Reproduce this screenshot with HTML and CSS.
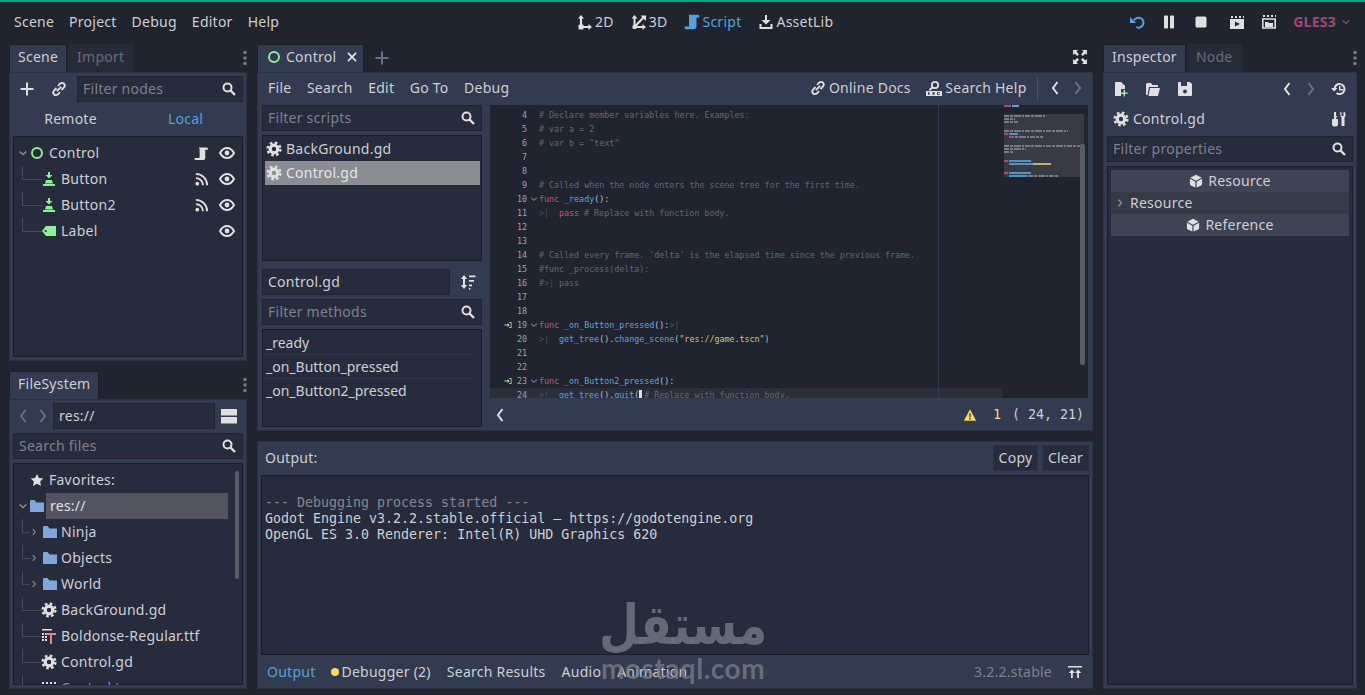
FILE: index.html
```html
<!DOCTYPE html>
<html lang="en">
<head>
    <meta charset="UTF-8">
    <title>Godot Engine</title>
    <link rel="stylesheet" href="styles.css">
</head>
<body>
    <svg class="sprite" xmlns="http://www.w3.org/2000/svg">
        <symbol id="i-search" viewBox="0 0 16 16"><circle cx="6.5" cy="6.5" r="4" fill="none" stroke="currentColor" stroke-width="2"/><path d="M9.5 9.5l4.5 4.5" stroke="currentColor" stroke-width="2.4"/></symbol>
        <symbol id="i-gear" viewBox="0 0 16 16"><circle cx="8" cy="8" r="3.8" fill="none" stroke="currentColor" stroke-width="3.2"/><circle cx="8" cy="8" r="6.4" fill="none" stroke="currentColor" stroke-width="2.4" stroke-dasharray="2.6 2.43"/></symbol>
        <symbol id="i-eye" viewBox="0 0 16 16"><path d="M1 8c2-3.6 4.400-5 7-5s5 1.400 7 5c-2 3.600-4.400 5-7 5s-5-1.400-7-5z" fill="none" stroke="currentColor" stroke-width="2"/><circle cx="8" cy="8" r="2.400" fill="currentColor"/></symbol>
        <symbol id="i-plus" viewBox="0 0 16 16"><path d="M8 1.500v13M1.500 8h13" stroke="currentColor" stroke-width="2"/></symbol>
        <symbol id="i-link" viewBox="0 0 16 16"><path d="M7 5l2-2.300c1.400-1.200 3-1.200 4 0s1 2.800-.2 4L10.500 9M9 11l-2 2.300c-1.400 1.200-3 1.200-4 0s-1-2.800.2-4L5.500 7M5.800 10.200l4.400-4.400" fill="none" stroke="currentColor" stroke-width="1.800"/></symbol>
        <symbol id="i-circle" viewBox="0 0 16 16"><circle cx="8" cy="8" r="5" fill="none" stroke="currentColor" stroke-width="2"/></symbol>
        <symbol id="i-down" viewBox="0 0 16 16"><path d="M3.500 6l4.500 4 4.500-4" fill="none" stroke="currentColor" stroke-width="1.800"/></symbol>
        <symbol id="i-right" viewBox="0 0 16 16"><path d="M6 3.500l4 4.500-4 4.500" fill="none" stroke="currentColor" stroke-width="1.800"/></symbol>
        <symbol id="i-prev" viewBox="0 0 16 16"><path d="M10.500 2L6 8l4.500 6" fill="none" stroke="currentColor" stroke-width="2"/></symbol>
        <symbol id="i-next" viewBox="0 0 16 16"><path d="M5.500 2L10 8l-4.500 6" fill="none" stroke="currentColor" stroke-width="2"/></symbol>
        <symbol id="i-script" viewBox="0 0 16 16"><path d="M5 1.500h8.500c1 0 1.500.8 1.500 2.500h-3v8.500c0 1.500-.8 2.500-2.500 2.500H2c-1 0-1.500-.8-1.500-2.200H6V3.500C6 2.500 5.600 1.800 5 1.500z" fill="currentColor"/></symbol>
        <symbol id="i-signal" viewBox="0 0 16 16"><circle cx="3.500" cy="12.500" r="2" fill="currentColor"/><path d="M2 6.500c4.200 0 7.500 3.300 7.500 7.500M2 2c6.600 0 12 5.400 12 12" fill="none" stroke="currentColor" stroke-width="2"/></symbol>
        <symbol id="i-button" viewBox="0 0 16 16"><path d="M7 1h2v3h2.500L8 7.500 4.500 4H7zM5 9h6l1 3.500H4zM2 13h12v2H2z" fill="currentColor"/></symbol>
        <symbol id="i-label" viewBox="0 0 16 16"><path d="M5 3h10v10H5L1 8z" fill="currentColor"/><circle cx="4.700" cy="8" r="1" fill="#262c3b"/></symbol>
        <symbol id="i-star" viewBox="0 0 16 16"><path d="M8 1l2.200 4.600 5 .7-3.600 3.500.9 5L8 12.400 3.500 14.800l.9-5L.8 6.300l5-.7z" fill="currentColor"/></symbol>
        <symbol id="i-folder" viewBox="0 0 16 16"><path d="M1 3.500C1 2.700 1.500 2 2.300 2h3.200l2 2.500H15V14H1z" fill="currentColor"/></symbol>
        <symbol id="i-font" viewBox="0 0 16 16"><path d="M1 1h10v1.500H1zM1 5h2v2H1zM4 5h2v2H4zM1 8h2v2H1zM4 8h2v2H4zM1 11h2v2H1zM4 11h2v2H4z" fill="#e0e0e0"/><path d="M5 5h10v2h-4v9H9V7H5z" fill="#fc7f7f"/></symbol>
        <symbol id="i-scene" viewBox="0 0 16 16"><path d="M1 2h2v2H1zM5 2h2v2H5zM9 2h2v2H9zM13 2h2v2h-2zM1 6h14v9H1z" fill="currentColor"/></symbol>
        <symbol id="i-move" viewBox="0 0 16 16"><path d="M4 13V3M4 13h9" fill="none" stroke="currentColor" stroke-width="2.200"/><path d="M1 4.500L4 1l3 3.500zM11.500 10l3.500 3-3.500 3z" fill="currentColor"/><rect x="1.500" y="10.500" width="5" height="5" rx="1" fill="currentColor"/></symbol>
        <symbol id="i-3d" viewBox="0 0 16 16"><path d="M3.500 13V3.500M3.500 13H13M3.500 13L12.500 3.500" fill="none" stroke="currentColor" stroke-width="2"/><path d="M.5 4.500L3.500 1l3 3.500zM11.500 10l3.500 3-3.500 3zM9.500 1.500H15V7z" fill="currentColor"/><rect x="1.500" y="11" width="4" height="4" rx="1" fill="currentColor"/></symbol>
        <symbol id="i-scriptbig" viewBox="0 0 16 16"><path d="M5 .8h9c1 0 1.500 1 1.500 2.700h-3V12c0 2-1 3.200-2.500 3.200H2c-1 0-1.500-.9-1.500-2.700H5z" fill="currentColor"/></symbol>
        <symbol id="i-asset" viewBox="0 0 16 16"><path d="M7 1h2v5h3.500L8 10.500 3.500 6H7zM1.500 10v5h13v-5h-2v3h-9v-3z" fill="currentColor"/></symbol>
        <symbol id="i-reload" viewBox="0 0 16 16"><path d="M5 6.500A5 5 0 1 1 7 13" fill="none" stroke="currentColor" stroke-width="2"/><path d="M1 3v6h6z" fill="currentColor"/></symbol>
        <symbol id="i-pause" viewBox="0 0 16 16"><path d="M3 2.500c0-.5.500-1 1-1h2c.5 0 1 .5 1 1v11c0 .5-.5 1-1 1H4c-.5 0-1-.5-1-1zM9 2.500c0-.5.500-1 1-1h2c.5 0 1 .5 1 1v11c0 .5-.5 1-1 1h-2c-.5 0-1-.5-1-1z" fill="currentColor"/></symbol>
        <symbol id="i-stop" viewBox="0 0 16 16"><rect x="2.500" y="2.500" width="11" height="11" rx="1.500" fill="currentColor"/></symbol>
        <symbol id="i-clap" viewBox="0 0 16 16"><path d="M2 2h2v2H2zM6 2h2v2H6zM10 2h2v2h-2zM14 2h1v2h-1zM1 5h14v10H1z" fill="currentColor"/><path d="M6 7.500l5 2.500-5 2.500z" fill="#20242f"/></symbol>
        <symbol id="i-clap2" viewBox="0 0 16 16"><path d="M2 1h2v2H2zM6 1h2v2H6zM10 1h2v2h-2zM14 1h1v2h-1z" fill="currentColor"/><path d="M1.800 5h12.400v9H1.800z" fill="none" stroke="currentColor" stroke-width="1.600"/><path d="M4 8h3l1 1h4v4H4z" fill="currentColor"/></symbol>
        <symbol id="i-new" viewBox="0 0 16 16"><path d="M2 1h6l4 4v3H8v7H2z" fill="currentColor"/><path d="M12 9v2.500h2.500v1.500H12v2.500h-1.500V13H8v-1.500h2.500V9z" fill="#8eef97"/></symbol>
        <symbol id="i-open" viewBox="0 0 16 16"><path d="M1 3.500C1 2.500 2 2 3 2h3l1.500 2H13v2H4L2.500 14H1zM5 7h10l-2 8H3.500z" fill="currentColor"/></symbol>
        <symbol id="i-save" viewBox="0 0 16 16"><path d="M1 2c0-.5.500-1 1-1h11l2 2v11c0 .5-.5 1-1 1H2c-.5 0-1-.5-1-1z" fill="currentColor"/><path d="M4 1h6v4H4z" fill="#323b4f"/><circle cx="8" cy="10.500" r="2" fill="#323b4f"/></symbol>
        <symbol id="i-history" viewBox="0 0 16 16"><path d="M3.500 8a5 5 0 1 1 2 4" fill="none" stroke="currentColor" stroke-width="2"/><path d="M0 7h6.500L3.200 10.500zM8 5h1.500v3H12v1.500H8z" fill="currentColor"/></symbol>
        <symbol id="i-tools" viewBox="0 0 16 16"><path d="M3 1h2v4h1v1.500H5V8h1c.5 0 1 .5 1 1v4.500C7 15 5.500 15.500 4 15.500S1 15 1 13.500V9c0-.5.500-1 1-1h1zM9.500 1h1v4h2V1h1c1.500 1 1.500 4 0 5.500V15h-3V6.500C9 5 9 2 9.500 1z" fill="currentColor"/></symbol>
        <symbol id="i-cube" viewBox="0 0 16 16"><path d="M8 .8l6.500 3.400L8 7.600 1.500 4.200z" fill="currentColor"/><path d="M1 5.500L7.300 8.800V15.500L2 13c-.6-.3-1-.9-1-1.500zM15 5.500l-6.300 3.300v6.700L14 13c.6-.3 1-.9 1-1.500z" fill="currentColor"/></symbol>
        <symbol id="i-sort" viewBox="0 0 16 16"><path d="M4 3v10" stroke="currentColor" stroke-width="2"/><path d="M.8 5L4 1l3.200 4zM.8 11L4 15l3.200-4z" fill="currentColor"/><path d="M9 1.500h6.500v1.800H9zM9 6h5v1.800H9zM9 10.500h3v1.800H9zM9 14h1.500v1.500H9z" fill="currentColor"/></symbol>
        <symbol id="i-full" viewBox="0 0 16 16"><path d="M1 1h5L4.500 2.700 7 5.200 5.200 7 2.700 4.500 1 6zM15 1v5l-1.700-1.500L10.800 7 9 5.200l2.500-2.500L10 1zM1 15v-5l1.700 1.500L5.200 9 7 10.800l-2.500 2.500L6 15zM15 15h-5l1.500-1.700L9 10.800 10.800 9l2.500 2.500L15 10z" fill="currentColor"/></symbol>
        <symbol id="i-doc" viewBox="0 0 16 16"><circle cx="9" cy="5" r="3.200" fill="none" stroke="currentColor" stroke-width="1.800"/><path d="M6.500 7.500L3.500 10" stroke="currentColor" stroke-width="2"/><path d="M0 11h16v5H0z" fill="currentColor"/><path d="M2 12.200h1.500v2.600H2zM6.500 12.200h2v2.600h-2zM11 12.200h3v.8h-2v1h2v.8h-3z" fill="#323b4f"/></symbol>
        <symbol id="i-warn" viewBox="0 0 16 16"><path d="M8 1.500l7 13H1z" fill="currentColor"/><path d="M7.200 6h1.600v4.500H7.200zM7.200 11.500h1.600V13H7.200z" fill="#323b4f"/></symbol>
        <symbol id="i-bp" viewBox="0 0 16 16"><path d="M1 7h6V4l4 4-4 4V9H1zM10 2h5v12h-5v-1.500h3.500v-9H10z" fill="currentColor"/></symbol>
        <symbol id="i-dots" viewBox="0 0 6 16"><circle cx="3" cy="2.500" r="1.800" fill="currentColor"/><circle cx="3" cy="8" r="1.800" fill="currentColor"/><circle cx="3" cy="13.500" r="1.800" fill="currentColor"/></symbol>
        <symbol id="i-split" viewBox="0 0 16 16"><path d="M0 1h16v6.500H0zM0 9h16v6.500H0z" fill="currentColor"/></symbol>
        <symbol id="i-bottom" viewBox="0 0 16 16"><path d="M1 2h14v1.500H1zM4 9v5h1.800V9H8L4.900 5.500 1.800 9zM10.200 9v5H12V9h2.200l-3.100-3.500L8 9z" fill="currentColor"/></symbol>
    </svg>

    <div class="topline"></div>
    <header class="topbar">
        <nav class="menu">
            <span>Scene</span><span>Project</span><span>Debug</span><span>Editor</span><span>Help</span>
        </nav>
        <nav class="modes">
            <span class="mode"><svg class="ic"><use href="#i-move"/></svg>2D</span>
            <span class="mode"><svg class="ic"><use href="#i-3d"/></svg>3D</span>
            <span class="mode accent"><svg class="ic"><use href="#i-scriptbig"/></svg>Script</span>
            <span class="mode"><svg class="ic"><use href="#i-asset"/></svg>AssetLib</span>
        </nav>
        <div class="play">
            <svg class="ic accent"><use href="#i-reload"/></svg>
            <svg class="ic"><use href="#i-pause"/></svg>
            <svg class="ic"><use href="#i-stop"/></svg>
            <svg class="ic gap-l"><use href="#i-clap"/></svg>
            <svg class="ic"><use href="#i-clap2"/></svg>
            <span class="gles">GLES3<svg class="ic-s"><use href="#i-down"/></svg></span>
        </div>
    </header>

    <main class="workspace">
        <section class="col col-left">
            <div class="dock dock-scene">
                <div class="tabs">
                    <span class="tab active">Scene</span><span class="tab">Import</span>
                    <svg class="dots"><use href="#i-dots"/></svg>
                </div>
                <div class="panel">
                    <div class="bar">
                        <svg class="ic btn-add"><use href="#i-plus"/></svg>
                        <svg class="ic btn-link"><use href="#i-link"/></svg>
                        <div class="field grow"><span>Filter nodes</span><svg class="ic"><use href="#i-search"/></svg></div>
                    </div>
                    <div class="remote"><span>Remote</span><span class="accent">Local</span></div>
                    <div class="tree scene-tree">
                        <div class="row"><svg class="ic-s fold"><use href="#i-down"/></svg><svg class="ic green"><use href="#i-circle"/></svg><span class="grow">Control</span><svg class="ic"><use href="#i-script"/></svg><svg class="ic eye"><use href="#i-eye"/></svg></div>
                        <div class="row child"><svg class="ic green"><use href="#i-button"/></svg><span class="grow">Button</span><svg class="ic"><use href="#i-signal"/></svg><svg class="ic eye"><use href="#i-eye"/></svg></div>
                        <div class="row child"><svg class="ic green"><use href="#i-button"/></svg><span class="grow">Button2</span><svg class="ic"><use href="#i-signal"/></svg><svg class="ic eye"><use href="#i-eye"/></svg></div>
                        <div class="row child last"><svg class="ic green"><use href="#i-label"/></svg><span class="grow">Label</span><svg class="ic eye"><use href="#i-eye"/></svg></div>
                    </div>
                </div>
            </div>
            <div class="dock dock-files">
                <div class="tabs">
                    <span class="tab active">FileSystem</span>
                    <svg class="dots"><use href="#i-dots"/></svg>
                </div>
                <div class="panel">
                    <div class="bar">
                        <svg class="ic dim nav-btn"><use href="#i-prev"/></svg>
                        <svg class="ic dim nav-btn"><use href="#i-next"/></svg>
                        <div class="field path">res://</div>
                        <svg class="ic split"><use href="#i-split"/></svg>
                    </div>
                    <div class="field search-files"><span>Search files</span><svg class="ic"><use href="#i-search"/></svg></div>
                    <div class="tree file-tree">
                        <div class="row fav"><svg class="ic"><use href="#i-star"/></svg><span>Favorites:</span></div>
                        <div class="row root"><svg class="ic-s fold"><use href="#i-down"/></svg><svg class="ic folder"><use href="#i-folder"/></svg><span class="picked">res://</span></div>
                        <div class="row file"><svg class="ic-s fold"><use href="#i-right"/></svg><svg class="ic folder"><use href="#i-folder"/></svg><span>Ninja</span></div>
                        <div class="row file"><svg class="ic-s fold"><use href="#i-right"/></svg><svg class="ic folder"><use href="#i-folder"/></svg><span>Objects</span></div>
                        <div class="row file"><svg class="ic-s fold"><use href="#i-right"/></svg><svg class="ic folder"><use href="#i-folder"/></svg><span>World</span></div>
                        <div class="row file leaf"><svg class="ic"><use href="#i-gear"/></svg><span>BackGround.gd</span></div>
                        <div class="row file leaf"><svg class="ic"><use href="#i-font"/></svg><span>Boldonse-Regular.ttf</span></div>
                        <div class="row file leaf"><svg class="ic"><use href="#i-gear"/></svg><span>Control.gd</span></div>
                        <div class="row file leaf"><svg class="ic"><use href="#i-scene"/></svg><span class="accent">Control.tscn</span></div>
                        <div class="scroll-thumb"></div>
                    </div>
                </div>
            </div>
        </section>

        <section class="col col-center">
            <div class="dock dock-script">
                <div class="tabs">
                    <span class="tab active tab-control"><svg class="ic green"><use href="#i-circle"/></svg>Control<svg class="ic close"><use href="#i-plus"/></svg></span>
                    <svg class="ic dim add-tab"><use href="#i-plus"/></svg>
                    <svg class="ic full"><use href="#i-full"/></svg>
                </div>
                <div class="panel script-panel">
                    <div class="script-menu">
                        <span>File</span><span>Search</span><span>Edit</span><span>Go To</span><span>Debug</span>
                        <span class="help first"><svg class="ic"><use href="#i-link"/></svg>Online Docs</span>
                        <span class="help"><svg class="ic"><use href="#i-doc"/></svg>Search Help</span>
                        <i class="sep"></i>
                        <svg class="ic"><use href="#i-prev"/></svg>
                        <svg class="ic dim"><use href="#i-next"/></svg>
                    </div>
                    <div class="script-body">
                        <div class="script-side">
                            <div class="field"><span>Filter scripts</span><svg class="ic"><use href="#i-search"/></svg></div>
                            <div class="tree script-list">
                                <div class="item"><svg class="ic"><use href="#i-gear"/></svg>BackGround.gd</div>
                                <div class="item selected"><svg class="ic"><use href="#i-gear"/></svg>Control.gd</div>
                            </div>
                            <div class="name-row"><div class="field lit grow">Control.gd</div><svg class="ic"><use href="#i-sort"/></svg></div>
                            <div class="field"><span>Filter methods</span><svg class="ic"><use href="#i-search"/></svg></div>
                            <div class="tree method-list">
                                <div class="method">_ready</div>
                                <div class="method">_on_Button_pressed</div>
                                <div class="method">_on_Button2_pressed</div>
                            </div>
                        </div>
                        <div class="editor">
                            <div class="code">
                                <div class="ln"><b>4</b><u></u><span class="cm"># Declare member variables here. Examples:</span></div>
                                <div class="ln"><b>5</b><u></u><span class="cm"># var a = 2</span></div>
                                <div class="ln"><b>6</b><u></u><span class="cm"># var b = "text"</span></div>
                                <div class="ln"><b>7</b><u></u></div>
                                <div class="ln"><b>8</b><u></u></div>
                                <div class="ln"><b>9</b><u></u><span class="cm"># Called when the node enters the scene tree for the first time.</span></div>
                                <div class="ln"><b>10</b><u><svg class="ic-f"><use href="#i-down"/></svg></u><span class="kw">func </span><span class="fn">_ready</span><span class="sy">():</span></div>
                                <div class="ln"><b>11</b><u></u><i class="tb">&gt;|</i><span class="kw">pass </span><span class="cm"># Replace with function body.</span></div>
                                <div class="ln"><b>12</b><u></u></div>
                                <div class="ln"><b>13</b><u></u></div>
                                <div class="ln"><b>14</b><u></u><span class="cm"># Called every frame. 'delta' is the elapsed time since the previous frame.</span></div>
                                <div class="ln"><b>15</b><u></u><span class="cm">#func _process(delta):</span></div>
                                <div class="ln"><b>16</b><u></u><span class="cm">#</span><i class="tb tb-short">&gt;|</i><span class="cm">pass</span></div>
                                <div class="ln"><b>17</b><u></u></div>
                                <div class="ln"><b>18</b><u></u></div>
                                <div class="ln"><svg class="ic-b"><use href="#i-bp"/></svg><b>19</b><u><svg class="ic-f"><use href="#i-down"/></svg></u><span class="kw">func </span><span class="fn">_on_Button_pressed</span><span class="sy">():</span><i class="tb">&gt;|</i></div>
                                <div class="ln"><b>20</b><u></u><i class="tb">&gt;|</i><span class="fn">get_tree</span><span class="sy">().</span><span class="fn">change_scene</span><span class="sy">(</span><span class="st">"res://game.tscn"</span><span class="sy">)</span></div>
                                <div class="ln"><b>21</b><u></u></div>
                                <div class="ln"><b>22</b><u></u></div>
                                <div class="ln"><svg class="ic-b"><use href="#i-bp"/></svg><b>23</b><u><svg class="ic-f"><use href="#i-down"/></svg></u><span class="kw">func </span><span class="fn">_on_Button2_pressed</span><span class="sy">():</span></div>
                                <div class="ln current"><b>24</b><u></u><i class="tb">&gt;|</i><span class="fn">get_tree</span><span class="sy">().</span><span class="fn">quit</span><span class="sy">(</span><i class="caret"></i><span class="cm"># Replace with function body.</span></div>
                                <i class="ruler"></i>
                                <svg class="minimap" viewBox="0 0 80 72" width="80" height="72">
                                    <rect y="9" width="80" height="63" fill="#383b46"/>
                                    <rect y="0" width="7" height="2" fill="#b8486f"/><rect x="8" y="0" width="7" height="2" fill="#6a9cc8"/>
                                    <path class="mm-text" d="M0 11h42M0 14h11M0 17h14M0 26h64M5 32h34M0 41h76M0 44h22M0 47h10"/>
                                    <rect y="28" width="4" height="2" fill="#b8486f"/><rect x="5" y="28" width="9" height="2" fill="#4f94c9"/>
                                    <rect x="5" y="31" width="5" height="2" fill="#b8486f"/>
                                    <rect y="55" width="4" height="2" fill="#b8486f"/><rect x="5" y="55" width="22" height="2" fill="#4f94c9"/>
                                    <rect x="5" y="58" width="24" height="2" fill="#4f94c9"/><rect x="29" y="58" width="18" height="2" fill="#c8b060"/>
                                    <rect y="67" width="4" height="2" fill="#b8486f"/><rect x="5" y="67" width="22" height="2" fill="#4f94c9"/>
                                    <rect x="5" y="70" width="18" height="2" fill="#4f94c9"/>
                                    <path class="mm-text" d="M24 71h30"/>
                                </svg>
                                <i class="code-scroll"></i>
                            </div>
                            <div class="status">
                                <svg class="ic"><use href="#i-prev"/></svg>
                                <svg class="ic warn"><use href="#i-warn"/></svg>
                                <span class="warn-n">1</span>
                                <span class="pos">( 24, 21)</span>
                            </div>
                        </div>
                    </div>
                </div>
            </div>
            <div class="dock dock-output">
                <div class="out-head">
                    <span class="grow">Output:</span>
                    <button class="out-btn">Copy</button>
                    <button class="out-btn">Clear</button>
                </div>
                <pre class="out-text"><span class="out-dim">
--- Debugging process started ---</span>
Godot Engine v3.2.2.stable.official – https://godotengine.org
OpenGL ES 3.0 Renderer: Intel(R) UHD Graphics 620</pre>
                <div class="out-tabs">
                    <span class="accent">Output</span>
                    <span class="debugger"><i class="dot"></i>Debugger (2)</span>
                    <span>Search Results</span>
                    <span>Audio</span>
                    <span>Animation</span>
                    <span class="version">3.2.2.stable</span>
                    <svg class="ic"><use href="#i-bottom"/></svg>
                </div>
            </div>
        </section>

        <section class="col col-right">
            <div class="tabs">
                <span class="tab active">Inspector</span><span class="tab">Node</span>
                <svg class="dots"><use href="#i-dots"/></svg>
            </div>
            <div class="panel">
                <div class="bar insp-tools">
                    <svg class="ic"><use href="#i-new"/></svg>
                    <svg class="ic"><use href="#i-open"/></svg>
                    <svg class="ic"><use href="#i-save"/></svg>
                    <svg class="ic insp-prev"><use href="#i-prev"/></svg>
                    <svg class="ic dim insp-next"><use href="#i-next"/></svg>
                    <svg class="ic insp-hist"><use href="#i-history"/></svg>
                </div>
                <div class="insp-file"><svg class="ic"><use href="#i-gear"/></svg><span class="grow">Control.gd</span><svg class="ic"><use href="#i-tools"/></svg></div>
                <div class="field"><span>Filter properties</span><svg class="ic"><use href="#i-search"/></svg></div>
                <div class="tree insp-tree">
                    <div class="sect"><svg class="ic"><use href="#i-cube"/></svg>Resource</div>
                    <div class="sub"><svg class="ic-s fold"><use href="#i-right"/></svg>Resource</div>
                    <div class="sect"><svg class="ic"><use href="#i-cube"/></svg>Reference</div>
                </div>
            </div>
        </section>
    </main>

    <div class="watermark">
        <div class="wm-ar">مستقل</div>
        <div class="wm-en">mostaql.com</div>
    </div>
</body>
</html>
```

FILE: styles.css
```css
* {
    box-sizing: border-box;
}

body {
    margin: 0;
    height: 695px;
    overflow: hidden;
    background-color: #20242f;
    color: #cdcfd3;
    font-family: "Noto Sans", sans-serif;
    font-size: 14px;
    line-height: 20px;
    letter-spacing: 0.25px;
}

.sprite {
    display: none;
}

.ic {
    width: 16px;
    height: 16px;
    flex: none;
    color: #e0e0e0;
}

.ic-s {
    width: 12px;
    height: 12px;
    flex: none;
    color: #8b8f99;
}

.grow {
    flex: 1;
    min-width: 0;
}

.accent {
    color: #5a9fd8;
}

.green {
    color: #8eef97;
}

.dim {
    color: #6b7180;
}

/* top bar */
.topline {
    height: 2px;
    background-color: #03a884;
}

.topbar {
    display: flex;
    align-items: center;
    height: 42px;
    padding: 0 0 2px 14px;
}

.menu {
    display: flex;
    gap: 15px;
    width: 563px;
}

.modes {
    display: flex;
    gap: 17px;
}

.mode {
    display: flex;
    align-items: center;
    gap: 2px;
}

.mode.accent .ic {
    color: #5a9fd8;
}

.play {
    display: flex;
    align-items: center;
    gap: 16px;
    margin-left: auto;
    padding-right: 13px;
}

.play .accent {
    color: #5a9fd8;
}

.gap-l {
    margin-left: 4px;
}

.gles {
    display: flex;
    align-items: center;
    gap: 4px;
    color: #a5466c;
    font-weight: 700;
}

.gles .ic-s {
    color: #7c4a64;
}

/* docks */
.workspace {
    display: flex;
    gap: 10px;
    height: 645px;
    padding-left: 9px;
}

.col {
    display: flex;
    flex-direction: column;
}

.col-left {
    width: 238px;
    gap: 10px;
}

.col-center {
    width: 836px;
    gap: 10px;
}

.col-right {
    width: 254px;
}

.dock {
    display: flex;
    flex-direction: column;
}

.dock-scene {
    height: 317px;
}

.dock-files {
    height: 318px;
}

.dock-script {
    height: 387px;
}

.tabs {
    display: flex;
    align-items: stretch;
    flex: none;
    height: 28px;
    gap: 1px;
}

.tab {
    display: flex;
    align-items: center;
    padding: 0 9px 2px;
    background-color: #262b38;
    color: #666c7a;
}

.tab.active {
    background-color: #323b4f;
    color: #cdcfd3;
    box-shadow: inset 1px 1px 0 #1b1f29, inset -1px 0 0 #1b1f29;
}

.dots {
    width: 6px;
    height: 16px;
    margin: 6px -1px 0 auto;
    color: #767a84;
}

.panel {
    display: flex;
    flex-direction: column;
    flex: 1;
    min-height: 0;
    padding: 4px;
    background-color: #323b4f;
    box-shadow: inset 0 0 0 1px #2a3142;
}

.field {
    display: flex;
    align-items: center;
    justify-content: space-between;
    flex: none;
    height: 26px;
    padding: 0 6px;
    background-color: #262c3b;
    box-shadow: inset 0 0 0 1px #1f2430;
    color: #7d818c;
}

.field.grow {
    flex: 1;
}

.field.lit,
.field.path {
    color: #cdcfd3;
}

.tree {
    background-color: #262c3b;
    box-shadow: inset 0 0 0 1px #1a1e28;
}

.bar {
    display: flex;
    align-items: center;
    flex: none;
    height: 26px;
}

.btn-add {
    margin: 0 16px 0 6px;
}

.btn-link {
    margin: 0 10px 0 0;
}

.remote {
    display: grid;
    grid-template-columns: 1fr 1fr;
    flex: none;
    height: 34px;
    padding-top: 7px;
    text-align: center;
}

/* scene tree */
.scene-tree {
    flex: 1;
    padding-top: 4px;
}

.row {
    position: relative;
    display: flex;
    align-items: center;
    height: 26px;
    padding-right: 8px;
    gap: 4px;
}

.scene-tree .row {
    padding-left: 4px;
}

.scene-tree .row.child {
    padding-left: 28px;
}

.scene-tree .row > .fold {
    margin-right: -4px;
}

.scene-tree .row > .ic:nth-last-child(2) {
    width: 15px;
    height: 15px;
}

.eye {
    margin-left: 6px;
}

.row.child::before,
.row.file::before {
    content: "";
    position: absolute;
    left: 9px;
    top: 0;
    width: 19px;
    height: 13px;
    border-left: 1px solid #454a58;
    border-bottom: 1px solid #454a58;
}

.fold {
    margin-right: -1px;
}

/* file tree */
.search-files {
    margin-top: 4px;
}

.dock-files .bar {
    padding-left: 2px;
}

.nav-btn {
    margin-right: 4px;
}

.path {
    width: 162px;
    margin-left: -2px;
}

.split {
    margin-left: 6px;
}

.file-tree {
    position: relative;
    flex: 1;
    min-height: 0;
    margin-top: 4px;
    padding-top: 4px;
    overflow: hidden;
}

.fav {
    padding-left: 17px;
    gap: 5px;
}

.fav .ic {
    width: 14px;
    height: 14px;
}

.root {
    padding-left: 4px;
    gap: 1px;
}

.root .picked {
    align-self: stretch;
    width: 182px;
    padding: 3px 0 0 4px;
    background-color: #525560;
    color: #e0e0e0;
}

.folder {
    color: #80a6db;
}

.row.file {
    padding-left: 16px;
    gap: 3px;
}

.row.file.leaf {
    padding-left: 28px;
    gap: 4px;
}

.row.file .ic-s {
    width: 10px;
    margin-right: 0;
}

.row.file::before {
    width: 7px;
}

.row.file.leaf::before {
    width: 18px;
}

.scroll-thumb {
    position: absolute;
    top: 8px;
    right: 4px;
    width: 4px;
    height: 108px;
    border-radius: 2px;
    background-color: #585c68;
}

/* script editor */
.tab-control {
    width: 107px;
    gap: 4px;
    padding: 0 4px 2px 9px;
}

.close {
    margin-left: 5px;
    width: 14px;
    height: 14px;
    transform: rotate(45deg);
}

.add-tab {
    margin: 6px 0 0 9px;
    color: #6b7180;
}

.full {
    margin: 5px 5px 0 auto;
}

.script-panel {
    padding: 0 5px;
}

.script-menu {
    display: flex;
    align-items: center;
    flex: none;
    height: 33px;
    gap: 15.5px;
    margin: 0 -5px;
    padding: 0 7px 1px 11px;
}

.help {
    display: flex;
    align-items: center;
    gap: 3px;
}

.help.first {
    margin-left: auto;
}

.sep {
    width: 1px;
    height: 25px;
    margin-left: -5px;
    background-color: #4a5264;
}

.script-menu > .ic {
    margin-left: -7px;
}

.script-menu > .ic.dim {
    margin-left: -8px;
}

.script-body {
    display: flex;
    flex: 1;
    min-height: 0;
    gap: 8px;
}

.script-side {
    display: flex;
    flex-direction: column;
    width: 220px;
    gap: 4px;
}

.script-list {
    height: 126px;
    padding: 2px 2px 3px 3px;
}

.item {
    display: flex;
    align-items: center;
    gap: 4px;
    height: 24px;
    padding-left: 1px;
}

.item.selected {
    background-color: #8a8d92;
    color: #e6e6e6;
}

.name-row {
    display: flex;
    align-items: center;
    gap: 10px;
    margin-top: 4px;
    padding-right: 6px;
}

.method-list {
    height: 98px;
    padding: 2px 8px 2px 4px;
    letter-spacing: 0;
}

.method {
    height: 24px;
    line-height: 23px;
    border-bottom: 1px dotted #3c4250;
}

.method:last-child {
    border-bottom: none;
}

.editor {
    display: flex;
    flex-direction: column;
    flex: 1;
    min-width: 0;
}

.code {
    position: relative;
    flex: none;
    height: 293px;
    padding-top: 3px;
    background-color: #20242f;
    overflow: hidden;
    font-family: "DejaVu Sans Mono", monospace;
    font-size: 8.33px;
    letter-spacing: 0;
    color: #888b94;
}

.ln {
    position: relative;
    display: flex;
    align-items: center;
    height: 14px;
    white-space: pre;
    line-height: 14px;
}

.ln b {
    position: absolute;
    left: 20px;
    width: 17px;
    font-weight: 400;
    text-align: right;
    color: #a0a3aa;
}

.ln u {
    display: flex;
    width: 49px;
    flex: none;
    justify-content: flex-end;
}

.ic-f {
    width: 10px;
    height: 10px;
    color: #6f737d;
}

.ic-b {
    position: absolute;
    left: 14px;
    width: 8px;
    height: 8px;
    color: #a8f0ae;
}

.current {
    width: 512px;
    background-color: #2a2e39;
}

.cm {
    color: #62666f;
}

.kw {
    color: #c8507f;
}

.fn {
    color: #5da3dc;
}

.sy {
    color: #b4c0d0;
}

.st {
    color: #d6c27c;
}

.tb {
    display: inline-block;
    width: 20px;
    flex: none;
    font-style: normal;
    color: #4a5060;
}

.tb-short {
    width: 15px;
}

.caret {
    display: inline-block;
    width: 3px;
    height: 10px;
    margin-right: 2px;
    background-color: #e0e0e0;
}

.ruler {
    position: absolute;
    left: 448px;
    top: 0;
    bottom: 0;
    width: 1px;
    background-color: #333b4d;
}

.minimap {
    position: absolute;
    left: 514px;
    top: 0;
}

.mm-text {
    fill: none;
    stroke: #777a83;
    stroke-width: 2;
    stroke-dasharray: 5 1 3 1 7 1 2 1;
}

.code-scroll {
    position: absolute;
    left: 590px;
    top: 39px;
    width: 5px;
    height: 221px;
    border-radius: 2px;
    background-color: #585c68;
}

.status {
    display: flex;
    align-items: center;
    flex: 1;
    padding: 0 4px 0 2px;
    font-family: "DejaVu Sans Mono", monospace;
    font-size: 13.3px;
    letter-spacing: 0;
}

.warn {
    margin-left: auto;
    width: 14px;
    height: 14px;
    color: #ffd75e;
}

.warn-n {
    margin-left: 16px;
    color: #ffd75e;
}

.pos {
    margin-left: 11px;
}

/* output */
.dock-output {
    flex: 1;
    padding: 4px 4px 0;
    background-color: #323b4f;
    box-shadow: inset 0 0 0 1px #2a3142;
}

.out-head {
    display: flex;
    align-items: center;
    flex: none;
    height: 26px;
    gap: 4px;
    padding-left: 4px;
}

.out-btn {
    height: 26px;
    width: 45px;
    padding: 0;
    border: none;
    background-color: #262c3b;
    box-shadow: inset 0 0 0 1px #2b3244;
    color: #cdcfd3;
    font: inherit;
    letter-spacing: inherit;
}

.out-btn:last-child {
    width: 47px;
}

.out-text {
    flex: none;
    height: 180px;
    margin: 4px 0 0;
    padding: 4px;
    background-color: #262c3b;
    box-shadow: inset 0 0 0 1px #1a1e28;
    font-family: "DejaVu Sans Mono", monospace;
    font-size: 13.3px;
    line-height: 16px;
    letter-spacing: 0;
    color: #cdcfd3;
}

.out-dim {
    color: #838792;
}

.out-tabs {
    display: flex;
    align-items: center;
    flex: 1;
    gap: 16px;
    padding: 0 6px;
}

.debugger {
    display: flex;
    align-items: center;
    gap: 2px;
}

.dot {
    width: 8px;
    height: 8px;
    border-radius: 50%;
    background-color: #ffd75e;
}

.version {
    margin-left: auto;
    margin-right: -1px;
    color: #7d818c;
}

/* inspector */
.insp-tools {
    gap: 16px;
    padding: 0 6px;
}

.insp-prev {
    margin-left: auto;
}

.insp-next {
    margin-left: -8px;
}

.insp-hist {
    margin-left: -4px;
}

.insp-file {
    display: flex;
    align-items: center;
    flex: none;
    gap: 4px;
    height: 34px;
    padding: 0 6px;
}

.insp-tree {
    flex: 1;
    margin-top: 4px;
    padding: 4px;
}

.sect,
.sub {
    display: flex;
    align-items: center;
    height: 22px;
}

.sect {
    justify-content: center;
    gap: 5px;
    background-color: #3e4454;
}

.sect .ic {
    width: 14px;
    height: 14px;
}

.sub {
    gap: 5px;
    padding-left: 3px;
    background-color: #353a47;
}

/* watermark */
.watermark {
    position: absolute;
    left: 598px;
    top: 594px;
    width: 170px;
    text-align: center;
    color: rgba(122, 126, 136, 0.75);
    font-weight: 700;
}

.wm-ar {
    font-family: "DejaVu Sans", sans-serif;
    font-size: 46px;
    line-height: 62px;
    transform: scaleY(1.2);
}

.wm-en {
    font-family: "Lato", sans-serif;
    font-size: 28px;
    line-height: 24px;
    letter-spacing: 0.5px;
}
```
